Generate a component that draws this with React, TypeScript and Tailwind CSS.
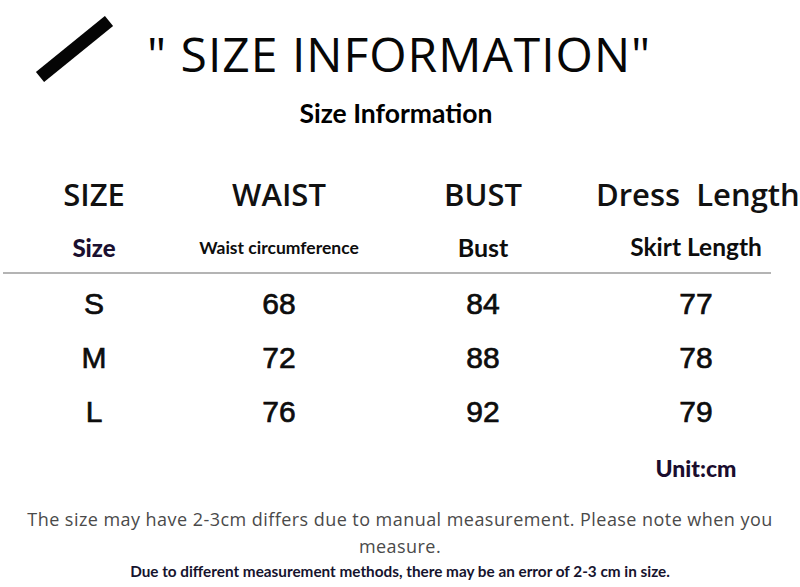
import React from "react";

const cols = "grid grid-cols-[188px_182px_226px_200px]";

const rows = [
  ["S", "68", "84", "77"],
  ["M", "72", "88", "78"],
  ["L", "76", "92", "79"],
];

const SlashMark: React.FC = () => (
  <svg width="84" height="68" viewBox="0 0 84 68" className="shrink-0">
    <line x1="7" y1="61" x2="76" y2="5" stroke="#050505" strokeWidth="13" />
  </svg>
);

export default function App() {
  return (
    <div className="w-[800px] h-[587px] bg-white overflow-hidden text-[#0b0b0b]">
      {/* heading */}
      <div className="flex items-center pl-[33px] pt-[14px] h-[86px]">
        <SlashMark />
        <h1 className="ml-[30px] mt-[7px] font-['Open_Sans',sans-serif] font-medium text-[48px] leading-none tracking-[1px] text-[#070707]">
          " SIZE INFORMATION"
        </h1>
      </div>
      <h2 className="mt-[12px] pr-[8px] text-center font-['Lato',sans-serif] font-bold text-[26.5px] leading-[30px] text-black">
        Size Information
      </h2>

      {/* table head */}
      <div className={`${cols} mt-[43px] h-[36px] items-center text-center font-['Open_Sans',sans-serif] font-semibold text-[31px] text-[#111]`}>
        <span>SIZE</span>
        <span>WAIST</span>
        <span>BUST</span>
        <span className="whitespace-pre">Dress  Length</span>
      </div>
      <div className={`${cols} mt-[22px] h-[30px] items-center text-center font-['Lato',sans-serif] font-bold text-[#0d0d0d]`}>
        <span className="text-[24px] font-black text-[#1b1030]">Size</span>
        <span className="text-[17.5px]">Waist circumference</span>
        <span className="text-[25px]">Bust</span>
        <span className="text-[24.5px]">Skirt Length</span>
      </div>
      <div className="mt-[13px] ml-[3px] w-[768px] h-[2px] bg-[#b4b4b4]" />

      {/* rows */}
      <div className="mt-[2px] font-['Liberation_Sans',Arial,sans-serif] text-[30px] text-[#0d0d0d] [-webkit-text-stroke:0.7px_#0d0d0d]">
        {rows.map((r) => (
          <div key={r[0]} className={`${cols} h-[54px] items-center text-center`}>
            {r.map((v, i) => (
              <span key={i}>{v}</span>
            ))}
          </div>
        ))}
      </div>

      <div className={`${cols} mt-[10px] h-[40px] items-center text-center`}>
        <span />
        <span />
        <span />
        <span className="font-['Lato',sans-serif] font-black text-[23px] text-[#1a0d2e]">Unit:cm</span>
      </div>

      {/* notes */}
      <p className="mt-[18px] px-[24px] text-center font-['Open_Sans',sans-serif] text-[18px] leading-[27px] tracking-[0.45px] text-[#4a4a4a]">
        The size may have 2-3cm differs due to manual measurement. Please note when you measure.
      </p>
      <p className="mt-[1px] text-center font-['Lato',sans-serif] font-bold text-[15.3px] leading-[20px] text-[#16142e]">
        Due to different measurement methods, there may be an error of 2-3 cm in size.
      </p>
    </div>
  );
}
